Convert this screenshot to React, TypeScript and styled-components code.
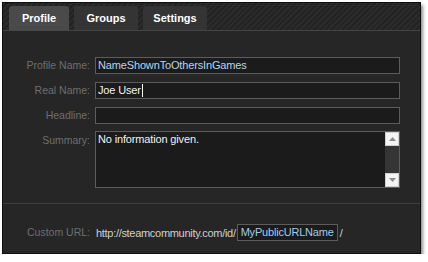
import styled, { createGlobalStyle } from 'styled-components';

const GlobalStyle = createGlobalStyle`
  html, body {
    margin: 0;
    padding: 0;
    background: #ffffff;
  }
  body {
    font-family: 'Liberation Sans', Arial, sans-serif;
  }
`;

const tabs = ['Profile', 'Groups', 'Settings'];

const fields = [
  { label: 'Profile Name:', value: 'NameShownToOthersInGames', tone: 'blue' },
  { label: 'Real Name:', value: 'Joe User', tone: 'white', caret: true },
  { label: 'Headline:', value: '', tone: 'white' },
];

export default function App() {
  return (
    <>
      <GlobalStyle />
      <Panel>
        <TabBar>
          {tabs.map((t, i) => (
            <Tab key={t} $active={i === 0}>
              {t}
            </Tab>
          ))}
        </TabBar>
        <Form>
          {fields.map((f) => (
            <Row key={f.label}>
              <Label>{f.label}</Label>
              <Input $tone={f.tone}>
                {f.value}
                {f.caret && <Caret />}
              </Input>
            </Row>
          ))}
          <Row $top>
            <Label>Summary:</Label>
            <TextArea>
              <AreaText>No information given.</AreaText>
              <ScrollBar>
                <ScrollButton>
                  <svg width="7" height="4" viewBox="0 0 7 4">
                    <path d="M0 4 L3.5 0 L7 4 Z" fill="#8a8a8a" />
                  </svg>
                </ScrollButton>
                <Track />
                <ScrollButton>
                  <svg width="7" height="4" viewBox="0 0 7 4">
                    <path d="M0 0 L3.5 4 L7 0 Z" fill="#8a8a8a" />
                  </svg>
                </ScrollButton>
              </ScrollBar>
            </TextArea>
          </Row>
        </Form>
        <Divider />
        <UrlRow>
          <Label>Custom URL:</Label>
          <UrlText>http://steamcommunity.com/id/</UrlText>
          <UrlInput>MyPublicURLName</UrlInput>
          <UrlText>/</UrlText>
        </UrlRow>
      </Panel>
    </>
  );
}

const Panel = styled.div`
  margin: 2px 0 0 2px;
  width: 419px;
  height: 252px;
  box-sizing: border-box;
  background: #262626;
  border: 1px solid #0e0e0e;
  box-shadow: 2px 3px 3px rgba(0, 0, 0, 0.45);
  display: flex;
  flex-direction: column;
`;

const TabBar = styled.div`
  height: 28px;
  box-sizing: border-box;
  padding: 3px 0 0 6px;
  display: flex;
  gap: 5px;
  align-items: flex-end;
  border-bottom: 1px solid #444444;
  background: repeating-linear-gradient(
    -45deg,
    #2b2b2b 0px,
    #2b2b2b 2px,
    #232323 2px,
    #232323 4px
  );
`;

const Tab = styled.div<{ $active?: boolean }>`
  width: ${(p) => (p.$active ? '60px' : '64px')};
  height: 24px;
  border-radius: 3px 3px 0 0;
  background: ${(p) => (p.$active ? '#4a4a4a' : '#343434')};
  color: #ffffff;
  font-size: 11px;
  font-weight: bold;
  display: flex;
  align-items: center;
  justify-content: center;
`;

const Form = styled.div`
  padding-top: 26px;
  display: flex;
  flex-direction: column;
  gap: 8px;
`;

const Row = styled.div<{ $top?: boolean }>`
  display: grid;
  grid-template-columns: 87px 305px;
  column-gap: 5px;
  align-items: ${(p) => (p.$top ? 'start' : 'center')};
`;

const Label = styled.div`
  text-align: right;
  color: #6e6e6e;
  font-size: 10.5px;
  white-space: nowrap;
  line-height: 17px;
`;

const Input = styled.div<{ $tone: string }>`
  height: 17px;
  box-sizing: border-box;
  border: 1px solid #5c5c5c;
  background: #1b1b1b;
  color: ${(p) => (p.$tone === 'blue' ? '#b6d4ee' : '#f2f2f2')};
  font-size: 11px;
  letter-spacing: -0.15px;
  line-height: 15px;
  padding-left: 2px;
  display: flex;
  align-items: center;
`;

const Caret = styled.span`
  width: 1px;
  height: 13px;
  background: #ffffff;
  margin-left: 1px;
`;

const TextArea = styled.div`
  height: 57px;
  box-sizing: border-box;
  border: 1px solid #5c5c5c;
  background: #1b1b1b;
  display: flex;
  justify-content: space-between;
  margin-top: -1px;
`;

const AreaText = styled.div`
  color: #f2f2f2;
  font-size: 11px;
  letter-spacing: -0.15px;
  padding: 1px 0 0 2px;
`;

const ScrollBar = styled.div`
  width: 14px;
  display: flex;
  flex-direction: column;
`;

const ScrollButton = styled.div`
  height: 14px;
  background: #f4f4f4;
  border: 1px solid #d0d0d0;
  box-sizing: border-box;
  display: flex;
  align-items: center;
  justify-content: center;
`;

const Track = styled.div`
  flex: 1;
  background: #353535;
`;

const Divider = styled.div`
  margin-top: 15px;
  height: 1px;
  background: #3e3e3e;
`;

const UrlRow = styled.div`
  padding: 20px 0 0 0;
  display: flex;
  align-items: center;
  & > ${Label} {
    width: 87px;
    margin-right: 6px;
  }
`;

const UrlText = styled.span`
  color: #d0d0d0;
  font-size: 11px;
  letter-spacing: -0.3px;
`;

const UrlInput = styled.span`
  height: 17px;
  box-sizing: border-box;
  border: 1px solid #5c5c5c;
  background: #1b1b1b;
  color: #9fcbef;
  font-size: 11px;
  letter-spacing: -0.2px;
  line-height: 15px;
  padding: 0 3px;
  margin: 0 2px 0 1px;
`;
